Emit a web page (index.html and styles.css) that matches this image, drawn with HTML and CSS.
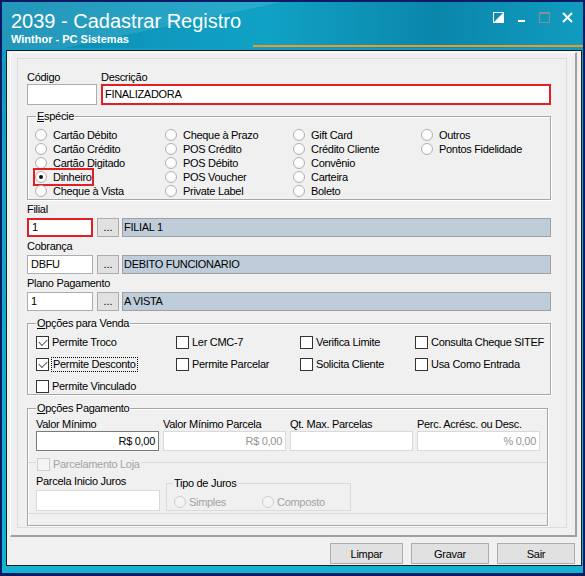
FILE: index.html
```html
<!DOCTYPE html>
<html lang="pt-BR">
<head>
    <meta charset="UTF-8">
    <meta name="viewport" content="width=device-width, initial-scale=1.0">
    <title>2039 - Cadastrar Registro</title>
    <link rel="stylesheet" href="styles.css">
</head>
<body>
<div class="window">
    <div class="titlebar">
        <div class="title-row">
            <div>
                <h1 class="title">2039 - Cadastrar Registro</h1>
                <div class="subtitle">Winthor - PC Sistemas</div>
            </div>
            <div class="controls">
                <svg viewBox="0 0 11 11"><rect x="0.5" y="0.5" width="10" height="10" fill="none" stroke="#fff"/><polygon points="10.5,0.5 10.5,10.5 0.5,10.5" fill="#fff"/></svg>
                <svg viewBox="0 0 11 11"><rect x="2" y="8" width="7" height="2" fill="#fff"/></svg>
                <svg viewBox="0 0 11 11"><rect x="0.5" y="0.5" width="10" height="10" fill="none" stroke="#8a8f94"/><rect x="0" y="0" width="11" height="2" fill="#8a8f94"/></svg>
                <svg viewBox="0 0 11 11"><path d="M1 1 L10 10 M10 1 L1 10" stroke="#fff" stroke-width="2"/></svg>
            </div>
        </div>
        <div class="accent"></div>
    </div>

    <div class="client">
        <div class="panel">
            <div class="frame">
                <div class="row-top">
                    <div class="field codigo">
                        <div class="label">Código</div>
                        <div class="input"></div>
                    </div>
                    <div class="field descricao">
                        <div class="label">Descrição</div>
                        <div class="input marked">FINALIZADORA</div>
                    </div>
                </div>

                <fieldset class="group especie">
                    <legend><u>E</u>spécie</legend>
                    <div class="radio-grid">
                        <label class="opt"><span class="radio"></span>Cartão Débito</label>
                        <label class="opt"><span class="radio"></span>Cartão Crédito</label>
                        <label class="opt"><span class="radio"></span>Cartão Digitado</label>
                        <label class="opt marked-opt"><span class="radio on"></span>Dinheiro</label>
                        <label class="opt"><span class="radio"></span>Cheque à Vista</label>
                        <label class="opt"><span class="radio"></span>Cheque à Prazo</label>
                        <label class="opt"><span class="radio"></span>POS Crédito</label>
                        <label class="opt"><span class="radio"></span>POS Débito</label>
                        <label class="opt"><span class="radio"></span>POS Voucher</label>
                        <label class="opt"><span class="radio"></span>Private Label</label>
                        <label class="opt"><span class="radio"></span>Gift Card</label>
                        <label class="opt"><span class="radio"></span>Crédito Cliente</label>
                        <label class="opt"><span class="radio"></span>Convênio</label>
                        <label class="opt"><span class="radio"></span>Carteira</label>
                        <label class="opt"><span class="radio"></span>Boleto</label>
                        <label class="opt"><span class="radio"></span>Outros</label>
                        <label class="opt"><span class="radio"></span>Pontos Fidelidade</label>
                    </div>
                </fieldset>

                <div class="lookup">
                    <div class="label">Filial</div>
                    <div class="lookup-row">
                        <div class="input code marked">1</div>
                        <div class="dots">...</div>
                        <div class="bar">FILIAL 1</div>
                    </div>
                </div>
                <div class="lookup">
                    <div class="label">Cobrança</div>
                    <div class="lookup-row">
                        <div class="input code">DBFU</div>
                        <div class="dots">...</div>
                        <div class="bar">DEBITO FUNCIONARIO</div>
                    </div>
                </div>
                <div class="lookup">
                    <div class="label">Plano Pagamento</div>
                    <div class="lookup-row">
                        <div class="input code">1</div>
                        <div class="dots">...</div>
                        <div class="bar">A VISTA</div>
                    </div>
                </div>

                <fieldset class="group venda">
                    <legend><u>O</u>pções para Venda</legend>
                    <div class="check-grid">
                        <label class="opt"><span class="check on"></span>Permite Troco</label>
                        <label class="opt"><span class="check"></span>Ler CMC-7</label>
                        <label class="opt"><span class="check"></span>Verifica Limite</label>
                        <label class="opt"><span class="check"></span>Consulta Cheque SITEF</label>
                        <label class="opt"><span class="check on"></span><span class="focus">Permite Desconto</span></label>
                        <label class="opt"><span class="check"></span>Permite Parcelar</label>
                        <label class="opt"><span class="check"></span>Solicita Cliente</label>
                        <label class="opt"><span class="check"></span>Usa Como Entrada</label>
                        <label class="opt"><span class="check"></span>Permite Vinculado</label>
                    </div>
                </fieldset>

                <fieldset class="group pagamento">
                    <legend><u>O</u>pções Pagamento</legend>
                    <div class="value-grid">
                        <div class="field">
                            <div class="label">Valor Mínimo</div>
                            <div class="input money active">R$ 0,00</div>
                        </div>
                        <div class="field">
                            <div class="label">Valor Mínimo Parcela</div>
                            <div class="input money off">R$ 0,00</div>
                        </div>
                        <div class="field">
                            <div class="label">Qt. Max. Parcelas</div>
                            <div class="input money off"></div>
                        </div>
                        <div class="field">
                            <div class="label">Perc. Acrésc. ou Desc.</div>
                            <div class="input money off">% 0,00</div>
                        </div>
                    </div>

                    <fieldset class="parcelamento">
                        <legend><label class="opt disabled"><span class="check"></span>Parcelamento Loja</label></legend>
                        <div class="juros-row">
                            <div class="field juros-inicio">
                                <div class="label">Parcela Inicio Juros</div>
                                <div class="input off tall"></div>
                            </div>
                            <fieldset class="group tipo">
                                <legend>Tipo de Juros</legend>
                                <div class="tipo-grid">
                                    <label class="opt disabled"><span class="radio"></span>Simples</label>
                                    <label class="opt disabled"><span class="radio"></span>Composto</label>
                                </div>
                            </fieldset>
                        </div>
                    </fieldset>
                </fieldset>
            </div>
        </div>

        <div class="buttons">
            <button class="btn narrow">Limpar</button>
            <button class="btn">Gravar</button>
            <button class="btn">Sair</button>
        </div>
    </div>
</div>
</body>
</html>
```

FILE: styles.css
```css
* {
    box-sizing: border-box;
}
body {
    margin: 0;
    font-family: "Liberation Sans", Arial, sans-serif;
    font-size: 11px;
    color: #000;
}
u {
    text-decoration: underline;
}

/* window chrome */
.window {
    width: 585px;
    height: 576px;
    border: 2px solid #0b1a63;
    border-bottom-width: 3px;
    background: linear-gradient(to bottom, #109cbf, #15b3d2);
    display: flex;
    flex-direction: column;
}
.titlebar {
    height: 46px;
    flex: none;
    display: flex;
    flex-direction: column;
    color: #fff;
    background:
        linear-gradient(168deg, rgba(255,255,255,0.10) 0 35%, rgba(0,0,0,0) 35%),
        linear-gradient(to right, #0b8ab1, #10a2c5 45%, #0b86ab 75%, #109cc0);
}
.title-row {
    display: flex;
    justify-content: space-between;
    padding: 7px 10px 0 9px;
}
.title {
    margin: 0;
    font-size: 20px;
    line-height: 24px;
    font-weight: normal;
}
.subtitle {
    font-size: 11px;
    font-weight: bold;
    line-height: 12px;
}
.controls {
    display: flex;
    gap: 12px;
    margin-top: 3px;
}
.controls svg {
    width: 11px;
    height: 11px;
    display: block;
}
.accent {
    height: 2px;
    margin-left: 251px;
    background: #f29a1c;
}

.client {
    flex: 1;
    margin: 2px 1px 7px 4px;
    border: 1px solid #1c1c1c;
    background: #f0f0f0;
    display: flex;
    flex-direction: column;
    letter-spacing: -0.3px;
}
.panel {
    margin: 1px 4px 0 3px;
    border-style: solid;
    border-width: 1px 2px 2px 1px;
    border-color: #fff #a0a0a0 #a0a0a0 #fff;
    padding: 5px 8px 7px 6px;
}
.frame {
    border: 1px solid #dcdcdc;
    padding: 11px 15px 1px 9px;
}

/* fields */
.label {
    line-height: 14px;
    white-space: nowrap;
}
.input {
    height: 21px;
    background: #fff;
    border: 1px solid #abadb3;
    padding: 0 3px;
    line-height: 19px;
    white-space: nowrap;
}
.input.marked {
    border: 2px solid #e31e24;
    line-height: 17px;
    padding-left: 2px;
}
.row-top {
    display: flex;
    gap: 4px;
}
.codigo {
    width: 70px;
}
.descricao {
    flex: 1;
}

/* group boxes */
.group {
    margin: 0;
    padding: 0;
    min-width: 0;
    border: 1px solid #a7a7a7;
    box-shadow: inset 1px 1px 0 #fff, 1px 1px 0 #fff;
}
.group > legend {
    margin-left: 8px;
    padding: 0 1px;
    line-height: 13px;
}
.opt {
    display: flex;
    align-items: center;
    gap: 6px;
    justify-self: start;
    white-space: nowrap;
    height: 14px;
}
.radio {
    width: 12px;
    height: 12px;
    border-radius: 50%;
    border: 1px solid #b3b3b3;
    background: radial-gradient(circle at 50% 40%, #fff 40%, #ececec);
    display: flex;
    align-items: center;
    justify-content: center;
    flex: none;
}
.radio.on::after {
    content: "";
    width: 4px;
    height: 4px;
    border-radius: 50%;
    background: #111;
}
.check {
    width: 13px;
    height: 13px;
    border: 1px solid #333;
    background: #fff;
    flex: none;
    display: flex;
    align-items: center;
    justify-content: center;
}
.check.on::after {
    content: "";
    width: 7px;
    height: 4px;
    border-left: 1.5px solid #555;
    border-bottom: 1.5px solid #555;
    transform: translateY(-1px) rotate(-45deg);
}
.disabled {
    color: #a3a3a3;
}
.disabled .radio,
.disabled .check {
    border-color: #cfcfcf;
    background: #f4f4f4;
}

.especie {
    margin-top: 5px;
}
.radio-grid {
    display: grid;
    grid-auto-flow: column;
    grid-template-rows: repeat(5, 14px);
    grid-template-columns: 130px 128px 128px 1fr;
    padding: 5px 0 1px 7px;
}
.marked-opt {
    outline: 2px solid #e31e24;
}

/* lookup rows */
.lookup {
    margin-top: 2px;
}
.lookup .label {
    margin-bottom: 2px;
}
.lookup-row {
    display: flex;
    height: 19px;
}
.input.code {
    width: 66px;
    height: 19px;
    line-height: 17px;
}
.input.code.marked {
    line-height: 15px;
    padding-left: 3px;
}
.dots {
    width: 22px;
    margin-left: 4px;
    background: #e1e1e1;
    border: 1px solid #adadad;
    text-align: center;
    line-height: 17px;
    letter-spacing: 0;
}
.bar {
    flex: 1;
    margin-left: 3px;
    background: #bfcddb;
    border: 1px solid #a0a0a0;
    padding-left: 1px;
    line-height: 17px;
}

/* opcoes para venda */
.venda {
    margin-top: 6px;
}
.check-grid {
    display: grid;
    grid-template-columns: 140px 124px 115px 1fr;
    grid-auto-rows: 14px;
    row-gap: 8px;
    padding: 5px 0 1px 8px;
}
.check-grid .opt {
    gap: 3px;
}
.focus {
    outline: 1px dotted #000;
    padding: 0 1px;
    line-height: 13px;
}

/* opcoes pagamento */
.pagamento {
    margin: 7px 3px 0 0;
    padding-bottom: 11px;
}
.value-grid {
    display: grid;
    grid-template-columns: repeat(4, 123px);
    column-gap: 4px;
    padding: 2px 0 0 8px;
}
.input.money {
    height: 20px;
    text-align: right;
    line-height: 18px;
}
.input.active {
    border-color: #7a7a7a;
}
.input.off {
    border-color: #d9d9d9;
    color: #959595;
}
.parcelamento {
    margin: 2px 0 0;
    padding: 0 0 2px;
    min-width: 0;
    border: solid #dadada;
    border-width: 1px 0;
}
.parcelamento > legend {
    margin-left: 8px;
    padding: 4px 1px 0;
    line-height: 14px;
}
.parcelamento .opt {
    gap: 3px;
}
.juros-row {
    display: flex;
    padding: 3px 0 0 8px;
}
.juros-inicio {
    width: 124px;
}
.juros-inicio .label {
    margin-bottom: 2px;
}
.tipo {
    width: 185px;
    margin-left: 6px;
    margin-top: 3px;
    border-color: #dadada;
    box-shadow: none;
}
.tipo > legend {
    margin-left: 6px;
}
.tipo-grid {
    display: grid;
    grid-template-columns: 88px 1fr;
    padding: 5px 0 0 7px;
}
.tipo-grid .opt {
    gap: 3px;
}

/* buttons */
.buttons {
    display: flex;
    justify-content: flex-end;
    gap: 8px;
    margin-top: 6px;
    padding-right: 6px;
}
.btn {
    width: 78px;
    height: 21px;
    font-family: "Liberation Sans", Arial, sans-serif;
    font-size: 11px;
    letter-spacing: -0.3px;
    color: #000;
    background: #e1e1e1;
    border: 1px solid #adadad;
    padding: 0;
}
.btn.narrow {
    width: 73px;
}
```
